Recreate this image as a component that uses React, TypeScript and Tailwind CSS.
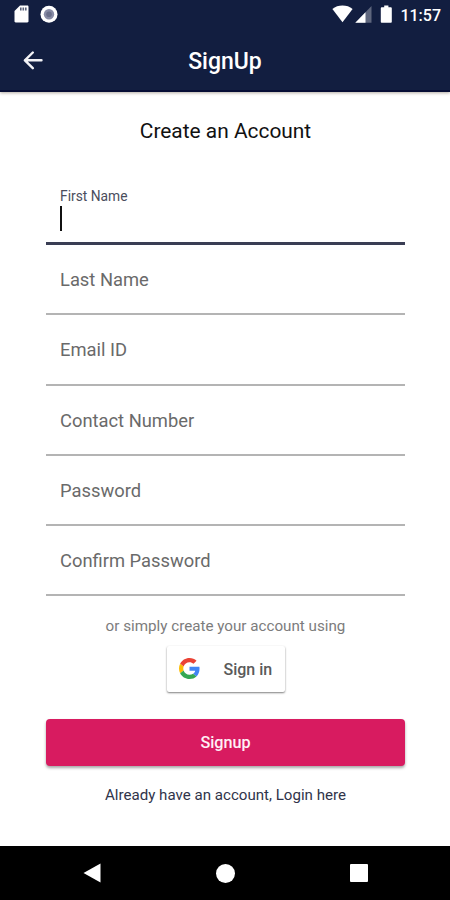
import { useState } from "react";

type Field = {
  id: string;
  label: string;
  type: string;
};

const FIELDS: Field[] = [
  { id: "lastName", label: "Last Name", type: "text" },
  { id: "email", label: "Email ID", type: "email" },
  { id: "contact", label: "Contact Number", type: "tel" },
  { id: "password", label: "Password", type: "password" },
  { id: "confirm", label: "Confirm Password", type: "password" },
];

function StatusBar() {
  return (
    <div className="flex h-[30px] items-start justify-between pl-[14px] pr-[9px] text-white">
      <div className="flex gap-[11px] pt-[5px]">
        <svg className="h-[18px] w-[15px]" viewBox="0 0 15 18" fill="currentColor">
          <path d="M6 .5h7.3c.7 0 1.2.5 1.2 1.2v14.6c0 .7-.5 1.2-1.2 1.2H1.7c-.7 0-1.2-.5-1.2-1.2V6z" />
          <path d="M6 2.4h1.6v3H6zM8.5 2.4h1.6v3H8.5zM11 2.4h1.6v3H11z" fill="#121e40" opacity=".7" />
        </svg>
        <svg className="h-[18px] w-[18px]" viewBox="0 0 18 18">
          <circle cx="9" cy="9.2" r="8.5" fill="#fff" />
          <circle cx="9" cy="9.2" r="5.2" fill="#878ba5" />
          <circle cx="9" cy="9.2" r="2.8" fill="#696e8a" />
        </svg>
      </div>
      <div className="flex pt-[5px]">
        <svg className="h-[18px] w-[21px]" viewBox="0 0 21 18" fill="currentColor">
          <path d="M.4 4C3.200 1.700 6.700.6 10.500.6s7.300 1.100 10.100 3.400L10.500 17.200z" />
        </svg>
        <svg className="ml-[2px] h-[18px] w-[17px]" viewBox="0 0 17 18" fill="currentColor">
          <path d="M16.500 1v16.700H.3z" opacity=".32" />
          <path d="M10.500 7.200v10.500H.3z" />
        </svg>
        <svg className="ml-[8px] h-[18px] w-[13px]" viewBox="0 0 13 18" fill="currentColor">
          <path d="M4.200.4h4.200v1.800h2.300c.6 0 1.100.5 1.100 1.100v13.400c0 .6-.5 1.100-1.100 1.100H1.900c-.6 0-1.100-.5-1.100-1.100V3.300c0-.6.500-1.100 1.100-1.100h2.300z" />
        </svg>
        <span className="ml-[7px] pt-px text-[16px] font-medium leading-5">11:57</span>
      </div>
    </div>
  );
}

function GoogleLogo() {
  return (
    <svg className="h-[21px] w-[21px]" viewBox="0 0 48 48">
      <path fill="#EA4335" d="M24 9.500c3.540 0 6.710 1.220 9.210 3.600l6.850-6.850C35.900 2.380 30.470 0 24 0 14.620 0 6.510 5.380 2.560 13.220l7.980 6.190C12.430 13.720 17.740 9.500 24 9.500z" />
      <path fill="#4285F4" d="M46.980 24.550c0-1.570-.15-3.090-.38-4.550H24v9.020h12.940c-.58 2.960-2.260 5.480-4.780 7.180l7.730 6c4.510-4.180 7.090-10.360 7.090-17.650z" />
      <path fill="#FBBC05" d="M10.530 28.590c-.48-1.450-.76-2.990-.76-4.590s.27-3.140.76-4.590l-7.980-6.190C.92 16.460 0 20.120 0 24c0 3.880.92 7.540 2.560 10.780l7.970-6.190z" />
      <path fill="#34A853" d="M24 48c6.480 0 11.930-2.130 15.890-5.810l-7.730-6c-2.150 1.450-4.920 2.300-8.160 2.300-6.260 0-11.570-4.220-13.470-9.910l-7.980 6.190C6.510 42.620 14.620 48 24 48z" />
    </svg>
  );
}

export default function App() {
  const [values, setValues] = useState<Record<string, string>>({});

  return (
    <div className="flex h-[900px] w-[450px] flex-col overflow-hidden bg-white font-['Roboto',sans-serif]">
      <header className="z-10 h-[92px] shrink-0 border-b-2 border-[#060d35] bg-[#121e40] shadow-[0_1px_3px_rgba(60,40,20,0.4)]">
        <StatusBar />
        <div className="grid h-[62px] grid-cols-[72px_1fr_72px] items-center">
          <button className="pl-[23px] text-[#f2f2f5]" aria-label="Back">
            <svg
              className="h-[20px] w-[20px]"
              viewBox="0 0 20 20"
              fill="none"
              stroke="currentColor"
              strokeWidth="2.4"
              strokeLinecap="round"
              strokeLinejoin="round"
            >
              <path d="M18.500 9.300H2M9.800 1.500L1.900 9.300l7.900 7.900" />
            </svg>
          </button>
          <h1 className="pt-[2px] text-center text-[23px] font-medium leading-7 text-white">SignUp</h1>
        </div>
      </header>

      <main className="flex min-h-0 flex-1 flex-col pl-[46px] pr-[45px]">
        <h2 className="mt-[25px] text-center text-[20.900px] leading-7 text-[#111]">Create an Account</h2>

        <label className="mt-[42px] flex h-[58px] flex-col border-b-[3px] border-[#3a3e54] pl-[14px]">
          <span className="text-[13.800px] leading-[18px] text-[#4a4d5c]">First Name</span>
          <span className="mt-px h-[25px] w-[2px] bg-[#111]" />
        </label>

        {FIELDS.map((field) => (
          <label key={field.id} className="flex h-[70.300px] items-center border-b-2 border-[#b4b4b4] pl-[14px] pt-[2px]">
            <input
              type={field.type}
              placeholder={field.label}
              value={values[field.id] ?? ""}
              onChange={(e) => setValues({ ...values, [field.id]: e.target.value })}
              className="w-full text-[18.350px] leading-6 outline-none placeholder:text-[#6a6a6a]"
            />
          </label>
        ))}

        <p className="mt-[19.500px] text-center text-[15.200px] leading-5 text-[#7c7c7c]">or simply create your account using</p>

        <button className="mt-[10px] flex h-[46px] w-[118px] shrink-0 items-center self-center rounded-[2px] bg-white pl-[12.500px] shadow-[0_1px_2px_rgba(0,0,0,0.5)]">
          <GoogleLogo />
          <span className="ml-[23.500px] whitespace-nowrap pt-[2px] text-[16px] font-medium text-[#5a5a5a]">Sign in</span>
        </button>

        <button className="mt-[27px] h-[47px] shrink-0 rounded-[4px] bg-[#d81b60] pt-[2px] text-[16.200px] font-medium text-[#fff0f5] shadow-[0_2px_3px_rgba(0,0,0,0.35)]">
          Signup
        </button>

        <p className="mt-[19px] text-center text-[15.100px] leading-5 text-[#30344a]">Already have an account, Login here</p>
      </main>

      <nav className="grid h-[54px] shrink-0 grid-cols-[183px_84px_183px] items-center justify-items-center bg-black text-white">
        <svg className="h-[20px] w-[18px]" viewBox="0 0 18 20" fill="currentColor">
          <path d="M17.500.5v19L.5 10z" />
        </svg>
        <span className="size-[19px] rounded-full bg-white" />
        <span className="size-[18px] rounded-[1px] bg-white" />
      </nav>
    </div>
  );
}
